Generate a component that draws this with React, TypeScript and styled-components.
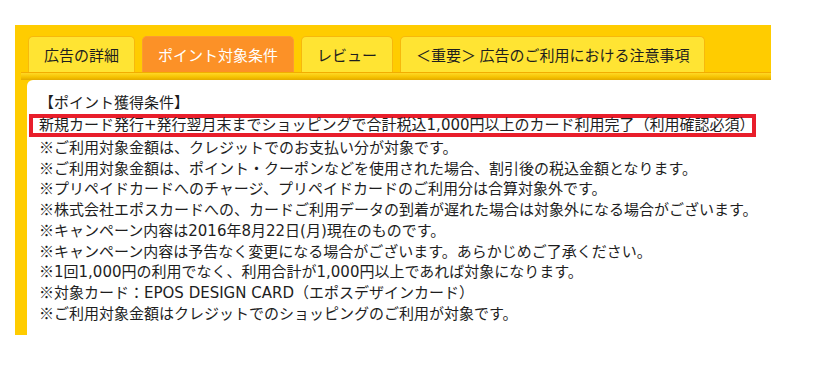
import styled, { createGlobalStyle } from "styled-components";

const tabs = [
  { label: "広告の詳細", active: false },
  { label: "ポイント対象条件", active: true },
  { label: "レビュー", active: false },
  { label: "＜重要＞ 広告のご利用における注意事項", active: false },
];

const notes = [
  "ご利用対象金額は、クレジットでのお支払い分が対象です。",
  "ご利用対象金額は、ポイント・クーポンなどを使用された場合、割引後の税込金額となります。",
  "プリペイドカードへのチャージ、プリペイドカードのご利用分は合算対象外です。",
  "株式会社エポスカードへの、カードご利用データの到着が遅れた場合は対象外になる場合がございます。",
  "キャンペーン内容は2016年8月22日(月)現在のものです。",
  "キャンペーン内容は予告なく変更になる場合がございます。あらかじめご了承ください。",
  "1回1,000円の利用でなく、利用合計が1,000円以上であれば対象になります。",
  "対象カード：EPOS DESIGN CARD（エポスデザインカード）",
  "ご利用対象金額はクレジットでのショッピングのご利用が対象です。",
];

export default function App() {
  return (
    <>
      <GlobalStyle />
      <Panel>
        <Header>
          <TabList>
            {tabs.map((t) => (
              <Tab key={t.label} $active={t.active}>
                {t.label}
              </Tab>
            ))}
          </TabList>
          <Bar />
        </Header>
        <Body>
          <Content>
            <Line>【ポイント獲得条件】</Line>
            <Highlight>
              新規カード発行+発行翌月末までショッピングで合計税込1,000円以上のカード利用完了（利用確認必須）
            </Highlight>
            {notes.map((n) => (
              <Line key={n}>
                <Mark>※</Mark>
                {n}
              </Line>
            ))}
          </Content>
        </Body>
      </Panel>
    </>
  );
}

// ---------------------------------------------------------------------------
// Styles
// ---------------------------------------------------------------------------

const GlobalStyle = createGlobalStyle`
  body {
    margin: 0;
    background: #fff;
    font-family: "DejaVu Sans", "Noto Sans CJK JP", sans-serif;
  }
`;

const Panel = styled.div`
  margin: 25px 0 0 15px;
  width: 756px;
`;

const Header = styled.div`
  background: #ffcc00;
  padding-top: 11px;
`;

const TabList = styled.div`
  display: flex;
  gap: 7px;
  padding-left: 13px;
  height: 36px;
`;

const Tab = styled.div<{ $active: boolean }>`
  box-sizing: border-box;
  height: 36px;
  padding: 0 15px;
  display: flex;
  align-items: center;
  border: 1px solid ${(p) => (p.$active ? "#fb9a33" : "#f7b80c")};
  border-bottom: none;
  border-radius: 5px 5px 0 0;
  background: ${(p) => (p.$active ? "#fc9127" : "#ffe433")};
  color: ${(p) => (p.$active ? "#fff" : "#1e1e1e")};
  font-family: "Noto Sans CJK JP", sans-serif;
  font-size: 15px;
  line-height: 1;
  white-space: nowrap;
`;

const Bar = styled.div`
  margin-left: 6px;
  height: 8px;
  box-sizing: border-box;
  border-top: 1px solid #f2ad00;
  background: linear-gradient(#ffd826, #f5c200 60%, #e3aa00);
`;

const Body = styled.div`
  background: #ffcc00;
  padding-left: 12px;
`;

const Content = styled.div`
  background: #fff;
  border-top-left-radius: 6px;
  padding: 13px 0 10px 12px;
  color: #1e1e1e;
  font-size: 15px;
`;

const Line = styled.div`
  height: 20.75px;
  line-height: 20.75px;
  white-space: nowrap;
`;

const Mark = styled.span`
  font-family: "Noto Sans CJK JP", sans-serif;
  line-height: 0;
`;

const Highlight = styled.div`
  box-sizing: border-box;
  width: 727px;
  height: 23px;
  margin-left: -10px;
  padding: 0 6px;
  border: 4px solid #e81e2b;
  line-height: 15px;
  white-space: nowrap;
  margin-bottom: 1px;
`;
